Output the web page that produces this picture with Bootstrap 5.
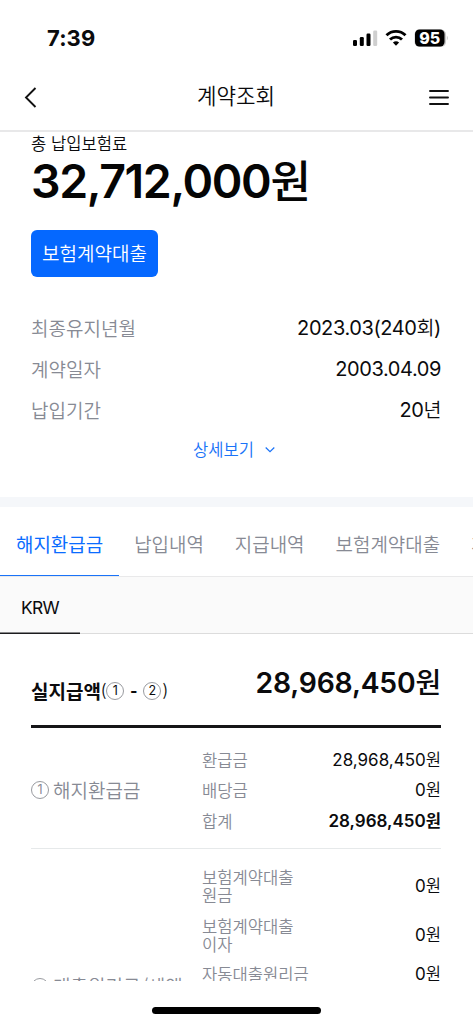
<!DOCTYPE html>
<html lang="ko">
<head>
<meta charset="utf-8">
<meta name="viewport" content="width=device-width, initial-scale=1">
<title>계약조회</title>
<link href="https://cdn.jsdelivr.net/npm/bootstrap@5.3.0/dist/css/bootstrap.min.css" rel="stylesheet">
<style>
body{font-family:Inter,"Noto Sans CJK KR",sans-serif;color:#0b0b0d;background:#fff;width:473px;height:1024px;overflow:hidden;line-height:1}
.ko{font-family:"Noto Sans CJK KR",sans-serif;font-weight:350}
.status{height:75px;padding:0 25px 0 47px}
.clock{font-size:22px;font-weight:700;letter-spacing:.1px}
.topbar{height:57px;padding:0 24px 11px 24px;border-bottom:2px solid #e8e8e9}
.title{font-size:21.2px;padding-left:5px;margin-top:-4px}
.view{height:849px;overflow:hidden}
.px{padding-left:31px;padding-right:32px}
.caption{font-size:16.6px;line-height:22px;height:22px}
.total{font-size:46.5px;font-weight:600;line-height:51px;height:54px;color:#050505;letter-spacing:-1.4px}
.total .ko{font-size:44px;font-weight:500;letter-spacing:0}
.loan{width:127px;height:47px;margin-top:22px;padding-bottom:2px!important;border-radius:6px;background:#0568ff;color:#fff;font-size:19px;border:0;line-height:1}
.facts{margin-top:30px}
.fact{height:41px;font-size:19px}
.fact .ko,.muted{color:#878a94}
.fact .val{font-size:20px;letter-spacing:-.4px}
.fact .val .ko{font-size:19.5px}
.val .ko,.fact .val .ko{color:inherit;font-weight:350}
.line .val .fw-bold{font-weight:700}
.more{height:38px;color:#1a73f8;font-size:16.6px;gap:11px;padding-right:4px}
.band{height:10px;background:#f5f7fa;margin-top:29px}
.tabs{height:70px;border-bottom:1px solid #e9e9ea;gap:31px;padding-left:16px;font-size:18.95px;white-space:nowrap;overflow:hidden}
.tabs span{flex:none;line-height:73px;height:69px;color:#878a94}
.tabs .on{color:#0a6cff;font-weight:400;margin-left:-16px;padding:0 16px;margin-right:-16px;border-bottom:1.5px solid #1a73f8;box-shadow:0 1px #8ab7f9}
.sub{height:57px;background:#fafafa;border-bottom:1px solid #dcdcdc}
.sub span{width:80px;height:57px;padding-left:21px;font-size:17.4px;letter-spacing:-.7px;line-height:61px;border-bottom:1px solid #1c1c1e;box-shadow:inset 0 -1px #88888a}
.pay{height:94px;border-bottom:3px solid #151517}
.pay .name{font-size:19px;font-weight:700;margin-top:33px;height:46px}
.name small{font-size:16px;font-weight:400}
.name .dash{margin:0 6px}
.pay .sum{font-size:28.3px;font-weight:600;margin-top:30px;line-height:34px;letter-spacing:-.2px}
.pay .sum .ko{font-size:28px;font-weight:500}
.num{display:inline-flex;width:18px;height:18px;border:1px solid #999ba0;border-radius:50%;align-items:center;justify-content:center;font-size:12.5px;line-height:16px;flex:none;font-family:Inter,sans-serif;font-weight:400}
.name .num{margin-top:2px}
.name .num:last-of-type{margin-right:1px}
.grp{border-bottom:1px solid #e6e9ea;height:121px}
.lab{width:171px;font-size:19px}
.grp .lab{padding-top:2px}
.grp .lab .num{margin-top:2px}
.grp2 .lab{padding-top:126.500px}
.grp2 .lab .num{margin-top:2px}
.rows1{padding-top:16.500px}
.rows2{padding-top:13px}
.line{height:30.6px;font-size:17px}
.line .muted{font-size:16.6px;line-height:18px}
.line .ko{font-size:16.6px}
.two{height:48.5px}
.home{position:absolute;left:152px;top:1007px;width:169px;height:7px;border-radius:4px;background:#000}
</style>
</head>
<body class="position-relative">
<div class="status d-flex align-items-center justify-content-between">
  <span class="clock">7:39</span>
  <svg width="97" height="20" viewBox="0 0 97 20">
    <rect x="2" y="12" width="4" height="6" rx="1.2"/><rect x="8.800" y="9" width="4" height="9" rx="1.2"/><rect x="15.500" y="5.500" width="4" height="12.500" rx="1.2"/><rect x="22.200" y="2.500" width="4" height="15.500" rx="1.2" fill="#cfcfcf"/>
    <g fill="none" stroke="#000" stroke-width="2.900"><path d="M35.500 7.200a13.700 13.700 0 0 1 19 0"/><path d="M39 11.500a8.700 8.700 0 0 1 12 0"/></g><path d="M41.900 14.500a4.700 4.700 0 0 1 6.200 0L45 17.800z"/>
    <rect x="63.500" y="1.500" width="31.500" height="17.500" rx="5" fill="#c9c9c9"/><rect x="64" y="1.500" width="29.500" height="17" rx="4.500"/><path d="M95.800 7.500q2.200 2.500 0 5z" fill="#c9c9c9"/>
    <text x="78.800" y="15.600" text-anchor="middle" font-family="Inter" font-weight="800" font-size="16" fill="#fff">95</text>
  </svg>
</div>
<header class="topbar d-flex align-items-center justify-content-between">
  <svg width="14" height="22" viewBox="0 0 14 22" fill="none" stroke="#111" stroke-width="1.900"><path d="M11.500 2L2 11.500L11.500 21"/></svg>
  <span class="title ko">계약조회</span>
  <svg width="20" height="18" viewBox="0 0 20 18" stroke="#111" stroke-width="1.900" stroke-linecap="round"><path d="M1 3h18M1 9.500h18M1 16h18"/></svg>
</header>
<main class="view">
  <section class="px">
    <div class="caption ko">총 납입보험료</div>
    <div class="total">32,712,000<span class="ko">원</span></div>
    <button class="loan ko btn p-0 d-block">보험계약대출</button>
    <div class="facts">
      <div class="fact d-flex align-items-center justify-content-between"><span class="ko">최종유지년월</span><span class="val">2023.03(240<span class="ko">회</span>)</span></div>
      <div class="fact d-flex align-items-center justify-content-between"><span class="ko">계약일자</span><span class="val">2003.04.09</span></div>
      <div class="fact d-flex align-items-center justify-content-between"><span class="ko">납입기간</span><span class="val">20<span class="ko">년</span></span></div>
    </div>
    <div class="more ko d-flex align-items-center justify-content-center">상세보기 <svg width="10" height="7" viewBox="0 0 10 7" fill="none" stroke="#1a73f8" stroke-width="1.200"><path d="M.7 1.500L5 5.700L9.300 1.500"/></svg></div>
  </section>
  <div class="band"></div>
  <nav class="tabs ko d-flex"><span class="on">해지환급금</span><span>납입내역</span><span>지급내역</span><span>보험계약대출</span><span>계약변경</span></nav>
  <div class="sub"><span class="d-block">KRW</span></div>
  <section class="px">
    <div class="pay d-flex justify-content-between">
      <div class="name ko d-flex align-items-center">실지급액<small>(</small><span class="num">1</span><span class="dash">-</span><span class="num">2</span><small>)</small></div>
      <div class="sum">28,968,450<span class="ko">원</span></div>
    </div>
    <div class="grp d-flex">
      <div class="lab muted ko d-flex align-items-center"><span class="num">1</span><span class="ms-1">해지환급금</span></div>
      <div class="flex-grow-1 rows1">
        <div class="line d-flex align-items-center justify-content-between"><span class="muted ko">환급금</span><span class="val">28,968,450<span class="ko">원</span></span></div>
        <div class="line d-flex align-items-center justify-content-between"><span class="muted ko">배당금</span><span class="val">0<span class="ko">원</span></span></div>
        <div class="line d-flex align-items-center justify-content-between"><span class="muted ko">합계</span><span class="val fw-semibold">28,968,450<span class="ko fw-bold">원</span></span></div>
      </div>
    </div>
    <div class="grp2 d-flex">
      <div class="lab muted ko d-flex"><span class="num">2</span><span class="ms-1">대출원리금/세액</span></div>
      <div class="flex-grow-1 rows2">
        <div class="line two d-flex align-items-center justify-content-between"><span class="muted ko">보험계약대출<br>원금</span><span class="val">0<span class="ko">원</span></span></div>
        <div class="line two d-flex align-items-center justify-content-between"><span class="muted ko">보험계약대출<br>이자</span><span class="val">0<span class="ko">원</span></span></div>
        <div class="line d-flex align-items-center justify-content-between"><span class="muted ko">자동대출원리금</span><span class="val">0<span class="ko">원</span></span></div>
      </div>
    </div>
  </section>
</main>
<div class="home"></div>
<script src="https://cdn.jsdelivr.net/npm/bootstrap@5.3.0/dist/js/bootstrap.bundle.min.js"></script>
</body>
</html>
